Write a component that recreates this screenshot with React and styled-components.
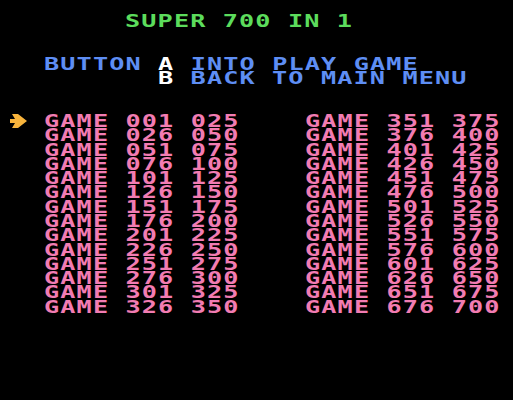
import styled, { createGlobalStyle } from 'styled-components';

const CELL_W = 16.3;
const ROW_H = 14.29;
const SCALE = 1.4;

const GlobalStyle = createGlobalStyle`
  html, body {
    margin: 0;
    padding: 0;
    background: #000;
  }
`;

const pad = (n) => String(n).padStart(3, '0');

// 28 blocks of 25 games, two columns of 14
const blocks = Array.from({ length: 28 }, (_, i) => ({
  from: pad(i * 25 + 1),
  to: pad(i * 25 + 25),
}));
const leftCol = blocks.slice(0, 14);
const rightCol = blocks.slice(14);

export default function App() {
  return (
    <Screen>
      <GlobalStyle />

      <Title $col={7}>
        <Text $color="#5cdc5c">SUPER 700 IN 1</Text>
      </Title>

      <Help>
        <Line $col={2}>
          <Text $color="#5e8ef4">
            BUTTON <Key>A</Key> INTO PLAY GAME
          </Text>
        </Line>
        <Line $col={9}>
          <Text $color="#5e8ef4">
            <Key>B</Key> BACK TO MAIN MENU
          </Text>
        </Line>
      </Help>

      <Menu>
        <Cursor>
          <svg width="18" height="14" viewBox="0 0 18 14">
            <polygon
              fill="#f8b43c"
              points="0,5 5,5 2,0 8,0 17,7 8,14 2,14 5,9 0,9"
            />
          </svg>
        </Cursor>
        <Column>
          {leftCol.map((b) => (
            <Line key={b.from}>
              <Text $color="#f27cb2">{`GAME ${b.from} ${b.to}`}</Text>
            </Line>
          ))}
        </Column>
        <Column>
          {rightCol.map((b) => (
            <Line key={b.from}>
              <Text $color="#f27cb2">{`GAME ${b.from} ${b.to}`}</Text>
            </Line>
          ))}
        </Column>
      </Menu>
    </Screen>
  );
}

const Screen = styled.div`
  width: 513px;
  height: 400px;
  background: #000;
  box-sizing: border-box;
  padding: 14px 0 0 11.4px;
  overflow: hidden;
  font-family: "DejaVu Sans Mono", "Liberation Mono", monospace;
  font-weight: bold;
  font-size: 18px;
`;

const Line = styled.div`
  height: ${ROW_H}px;
  line-height: ${ROW_H}px;
  padding-left: ${(p) => (p.$col || 0) * CELL_W}px;
  white-space: pre;
`;

const Title = styled(Line)`
  margin-bottom: ${ROW_H * 2}px;
`;

const Help = styled.div`
  margin-bottom: ${ROW_H * 2}px;
`;

// widen the glyphs to the chunky 8x8 look of the console font
const Text = styled.span`
  display: inline-block;
  color: ${(p) => p.$color};
  letter-spacing: ${CELL_W / SCALE - 10.84}px;
  transform: scaleX(${SCALE});
  transform-origin: left center;
`;

const Key = styled.span`
  color: #ffffff;
`;

const Menu = styled.div`
  display: grid;
  grid-template-columns: ${CELL_W * 2}px ${CELL_W * 16}px 1fr;
`;

const Cursor = styled.div`
  height: ${ROW_H}px;
  display: flex;
  align-items: center;
  margin-left: -1px;
`;

const Column = styled.div`
  display: flex;
  flex-direction: column;
`;
